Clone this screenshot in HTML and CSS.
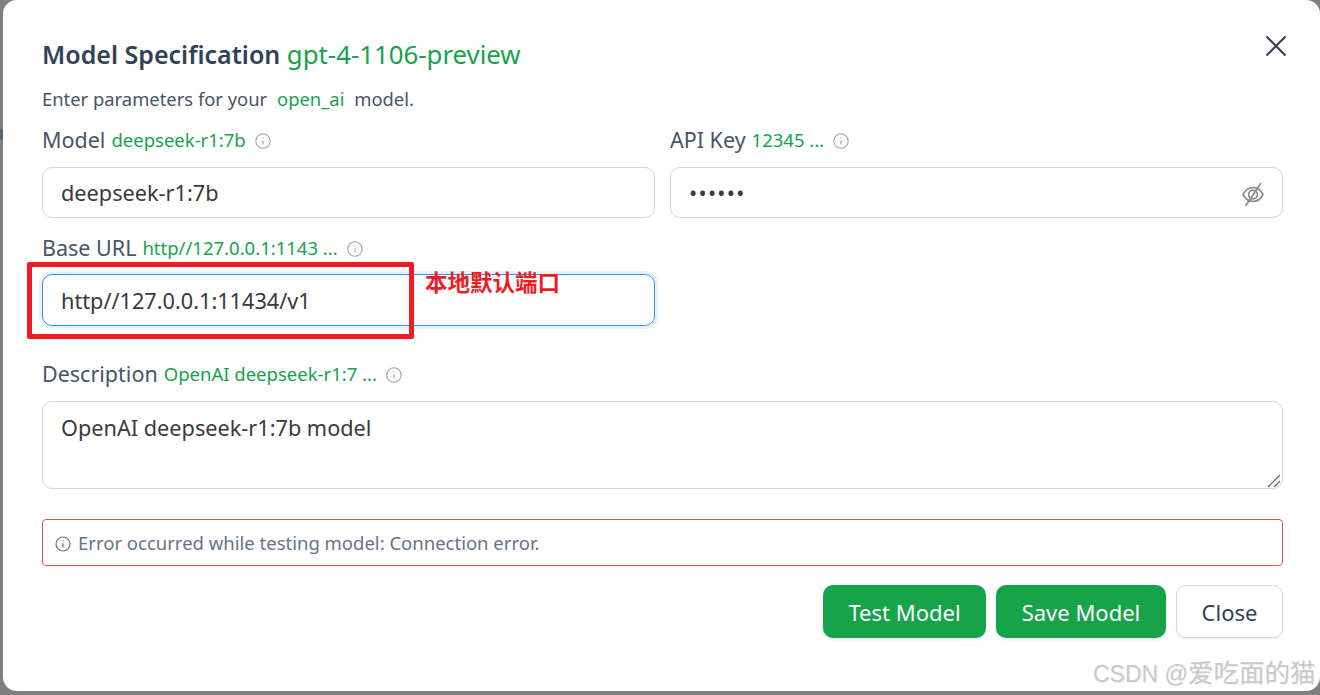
FILE: index.html
```html
<!DOCTYPE html>
<html lang="en">
  <head>
    <meta charset="UTF-8" />
    <title>Model Specification</title>
    <link rel="stylesheet" href="styles.css">
  </head>
  <body>
    <div class="backdropMark"></div>
    <div class="modal">
      <button class="closeX" type="button" aria-label="close">
        <svg width="26" height="26" viewBox="0 0 26 26" fill="none" stroke="#334155" stroke-width="2.2"><path d="M3.5 3.5 L22.5 22.5 M22.5 3.5 L3.5 22.5" /></svg>
      </button>

      <h1 class="title">Model Specification <span class="green light">gpt-4-1106-preview</span></h1>
      <p class="sub">Enter parameters for your <span class="green pad">open_ai</span> model.</p>

      <div class="twoCol">
        <div class="field">
          <div class="label">Model <span class="hint">deepseek-r1:7b</span>
            <svg class="info" viewBox="0 0 16 16"><circle cx="8" cy="8" r="7.2" /><path d="M8 7.2V11.4M8 4.6V5.6" /></svg>
          </div>
          <input class="input" type="text" value="deepseek-r1:7b">
        </div>
        <div class="field">
          <div class="label">API Key <span class="hint">12345 ...</span>
            <svg class="info" viewBox="0 0 16 16"><circle cx="8" cy="8" r="7.2" /><path d="M8 7.2V11.4M8 4.6V5.6" /></svg>
          </div>
          <div class="pwWrap">
            <input class="input password" type="password" value="123456">
            <svg class="eye" viewBox="0 0 24 24" fill="none" stroke="#8c8c8c" stroke-width="1.7"><path d="M2 12.5 C4.5 7.5 8 5.5 12 5.5 C16 5.5 19.5 7.5 22 12.5 C19.5 17.5 16 19.5 12 19.5 C8 19.5 4.5 17.5 2 12.5 Z" /><circle cx="12" cy="12.5" r="4.4" /><path d="M20 1 L4.5 24" /></svg>
          </div>
        </div>
      </div>

      <div class="twoCol baseRow">
        <div class="field">
          <div class="label">Base URL <span class="hint">http//127.0.0.1:1143 ...</span>
            <svg class="info" viewBox="0 0 16 16"><circle cx="8" cy="8" r="7.2" /><path d="M8 7.2V11.4M8 4.6V5.6" /></svg>
          </div>
          <input class="input focused" type="text" value="http//127.0.0.1:11434/v1">
        </div>
      </div>

      <div class="field descRow">
        <div class="label">Description <span class="hint">OpenAI deepseek-r1:7 ...</span>
          <svg class="info" viewBox="0 0 16 16"><circle cx="8" cy="8" r="7.2" /><path d="M8 7.2V11.4M8 4.6V5.6" /></svg>
        </div>
        <div class="areaWrap">
          <textarea class="input area">OpenAI deepseek-r1:7b model</textarea>
          <svg class="grip" viewBox="0 0 14 14" fill="none" stroke="#666" stroke-width="1.2"><path d="M1 13 L13 1 M7 13 L13 7" /></svg>
        </div>
      </div>

      <div class="alert">
        <svg class="alertIcon" viewBox="0 0 16 16"><circle cx="8" cy="8" r="7" /><path d="M8 7.2V11.4M8 4.6V5.6" /></svg>
        <span>Error occurred while testing model: Connection error.</span>
      </div>

      <div class="actions">
        <button class="btn primary testBtn" type="button">Test Model</button>
        <button class="btn primary saveBtn" type="button">Save Model</button>
        <button class="btn plain" type="button">Close</button>
      </div>

      <div class="redBox"></div>
      <div class="note">本地默认端口</div>
      <div class="watermark">CSDN @<span class="wmName">爱吃面的猫</span></div>
    </div>
  </body>
</html>
```

FILE: styles.css
```css
* {
  padding: 0;
  margin: 0;
  box-sizing: border-box;
}

html,
body {
  height: 100%;
  overflow: hidden;
}

body {
  background-color: #7f7f7f;
  font-family: "Noto Sans", "Noto Sans CJK SC", sans-serif;
  color: #334155;
  position: relative;
}

/* bit of the page behind the dialog, only a sliver shows */
.backdropMark {
  position: absolute;
  left: 0;
  top: 129px;
  width: 3px;
  height: 11px;
  border-radius: 0 3px 3px 0;
  background-color: #56657a;
}

.modal {
  position: relative;
  margin-left: 3px;
  width: 1317px;
  height: 691px;
  padding: 38px 37px 0 39px;
  background-color: #fff;
  border-radius: 14px;
}

.closeX {
  position: absolute;
  top: 33px;
  right: 31px;
  width: 26px;
  height: 26px;
  border: 0;
  background: none;
}

.title {
  font-size: 25px;
  line-height: 32px;
  font-weight: 600;
}

.green {
  color: #16a34a;
}

.light {
  font-size: 25.8px;
  font-weight: 400;
}

.sub {
  margin-top: 17px;
  margin-bottom: 13px;
  font-size: 18.4px;
  line-height: 24px;
  color: #475569;
}

.pad {
  margin: 0 5px;
}

.twoCol {
  display: grid;
  grid-template-columns: 613px 613px;
  column-gap: 15px;
}

.label {
  display: flex;
  align-items: center;
  height: 30px;
  font-size: 21.5px;
  color: #475569;
}

.hint {
  margin-left: 6px;
  font-size: 18.5px;
  color: #16a34a;
}

.info {
  width: 16px;
  height: 16px;
  margin-left: 9px;
  margin-top: 3px;
  fill: none;
  stroke: #9ca3af;
  stroke-width: 1.1;
}

.field .input {
  margin-top: 13px;
}

.input {
  display: block;
  width: 100%;
  height: 51px;
  padding: 0 18px;
  border: 1px solid #d4d4d4;
  border-radius: 10px;
  background: #fff;
  font-family: inherit;
  font-size: 21.7px;
  color: #3a3a3a;
  outline: none;
}

.password {
  letter-spacing: 1.3px;
}

.pwWrap {
  position: relative;
}

.eye {
  position: absolute;
  top: 15px;
  right: 18px;
  width: 24px;
  height: 24px;
}

.baseRow {
  margin-top: 14px;
}

.field .focused {
  height: 52px;
  margin-top: 12px;
  border-color: #3b8cf6;
  box-shadow: 0 0 0 3px #e6f3ff;
}

.descRow {
  margin-top: 32px;
}

.areaWrap {
  position: relative;
}

.area {
  height: 88px;
  padding: 10px 18px;
  line-height: 32px;
  resize: none;
}

.grip {
  position: absolute;
  right: 2px;
  bottom: 1px;
  width: 14px;
  height: 14px;
}

.alert {
  display: flex;
  align-items: center;
  height: 47px;
  margin-top: 30px;
  padding-left: 12px;
  border: 1px solid #e25050;
  border-radius: 4px;
  font-size: 18.5px;
  color: #64748b;
}

.alertIcon {
  width: 16px;
  height: 16px;
  margin-right: 7px;
  margin-top: 2px;
  fill: none;
  stroke: #64748b;
  stroke-width: 1.2;
}

.actions {
  display: flex;
  justify-content: flex-end;
  gap: 10px;
  margin-top: 19px;
}

.btn {
  height: 53px;
  border-radius: 10px;
  font-family: inherit;
  font-size: 22px;
}

.primary {
  border: 0;
  background-color: #16a34a;
  color: #fff;
  box-shadow: 0 2px 3px #dbeafe;
}

.testBtn {
  width: 163px;
}

.saveBtn {
  width: 170px;
}

.plain {
  width: 107px;
  border: 1px solid #d9d9d9;
  background-color: #fff;
  color: #334155;
  box-shadow: 0 1px 2px #eee;
}

/* annotations on top of the screenshot */
.redBox {
  position: absolute;
  left: 24px;
  top: 262px;
  width: 387px;
  height: 77px;
  border: 5px solid #ee1c25;
  border-radius: 2px;
}

.note {
  position: absolute;
  left: 422px;
  top: 267px;
  font-size: 22.5px;
  line-height: 32px;
  font-weight: 700;
  color: #ee1c25;
}

.watermark {
  position: absolute;
  left: 1090px;
  top: 657px;
  font-family: "Liberation Sans", "Noto Sans CJK SC", sans-serif;
  font-size: 23px;
  line-height: 32px;
  color: #c9c9c9;
  text-shadow: 1px 1px 1px #eee;
  white-space: pre;
}

.wmName {
  font-size: 25.5px;
}
```
